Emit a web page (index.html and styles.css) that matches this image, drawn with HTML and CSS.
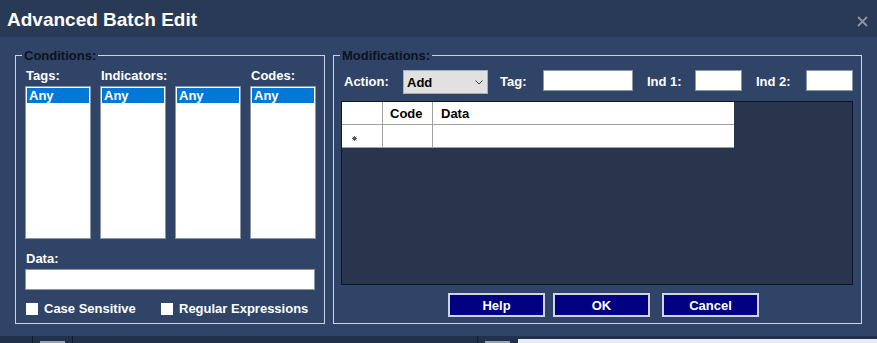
FILE: index.html
```html
<!DOCTYPE html>
<html lang="en">
<head>
    <meta charset="UTF-8">
    <title>Advanced Batch Edit</title>
    <link rel="stylesheet" href="styles.css">
</head>
<body>

    <div class="titlebar">
        <span class="title">Advanced Batch Edit</span>
        <svg class="close" width="11" height="11" viewBox="0 0 11 11">
            <path d="M1 1 L10 10 M10 1 L1 10" stroke="#8b94a5" stroke-width="1.8" fill="none"/>
        </svg>
    </div>

    <div class="main">
        <fieldset class="group conditions">
            <legend>Conditions:</legend>
            <div class="lists">
                <label class="lbl">Tags:</label>
                <label class="lbl span2">Indicators:</label>
                <label class="lbl">Codes:</label>
                <div class="listbox"><div class="item sel">Any</div></div>
                <div class="listbox"><div class="item sel">Any</div></div>
                <div class="listbox"><div class="item sel">Any</div></div>
                <div class="listbox"><div class="item sel">Any</div></div>
            </div>
            <label class="lbl data-lbl">Data:</label>
            <input type="text" class="textbox data-input">
            <div class="checks">
                <label class="check first"><input type="checkbox">Case Sensitive</label>
                <label class="check"><input type="checkbox">Regular Expressions</label>
            </div>
        </fieldset>

        <fieldset class="group mods">
            <legend>Modifications:</legend>
            <div class="action-row">
                <label class="lbl act-lbl">Action:</label>
                <div class="combo">
                    <span>Add</span>
                    <svg width="8" height="5" viewBox="0 0 8 5">
                        <path d="M0.5 0.5 L4 4 L7.5 0.5" stroke="#3c3c3c" stroke-width="1" fill="none"/>
                    </svg>
                </div>
                <label class="lbl tag-lbl">Tag:</label>
                <input type="text" class="textbox tag-input">
                <label class="lbl ind1-lbl">Ind 1:</label>
                <input type="text" class="textbox ind-input">
                <label class="lbl ind2-lbl">Ind 2:</label>
                <input type="text" class="textbox ind-input">
            </div>

            <div class="dgv">
                <table>
                    <tr class="head">
                        <td class="rowhead"></td>
                        <td class="code">Code</td>
                        <td>Data</td>
                    </tr>
                    <tr>
                        <td class="rowhead">
                            <svg width="5" height="5" viewBox="0 0 5 5">
                                <path d="M2.5 0 V5 M0 2.5 H5 M0.7 0.7 L4.3 4.3 M4.3 0.7 L0.7 4.3" stroke="#555" stroke-width="1" fill="none"/>
                            </svg>
                        </td>
                        <td class="code"></td>
                        <td></td>
                    </tr>
                </table>
            </div>

            <div class="buttons">
                <button class="btn">Help</button>
                <button class="btn ok">OK</button>
                <button class="btn cancel">Cancel</button>
            </div>
        </fieldset>
    </div>

    <div class="strip">
        <span class="sline first-line"></span>
        <span class="sbox"></span>
        <span class="sline second-line"></span>
        <span class="sline third-line"></span>
        <span class="sbox"></span>
        <span class="swhite"></span>
    </div>

</body>
</html>
```

FILE: styles.css
```css
body {
    margin: 0;
    width: 877px;
    height: 343px;
    overflow: hidden;
    background: #2f4466;
    font-family: "Liberation Sans", Arial, sans-serif;
    font-size: 13px;
    font-weight: bold;
    color: #fff;
}
.titlebar {
    display: flex;
    justify-content: space-between;
    align-items: flex-start;
    height: 37px;
    background: #293a56;
}
.title {
    font-size: 19px;
    line-height: 34px;
    padding: 3px 0 0 7px;
}
.close {
    margin: 16px 9px 0 0;
}
.main {
    display: flex;
    align-items: flex-start;
    gap: 8px;
    padding: 11px 15px 12px;
}
.group {
    margin: 0;
    height: 276px;
    min-width: 0;
    box-sizing: border-box;
    border: 1px solid #c9d3e3;
}
.group legend {
    padding: 0 2px;
    color: #0c1322;
    font-size: 13px;
    line-height: 15px;
}
.conditions {
    width: 310px;
    padding: 5px 9px 6px 9px;
}
.conditions legend {
    margin-left: -3px;
}
.mods {
    width: 529px;
    padding: 7px 8px 5px 7px;
}
.mods legend {
    margin-left: -1px;
}
.lbl {
    display: block;
    line-height: 15px;
    padding-left: 1px;
}
.lists {
    display: grid;
    grid-template-columns: repeat(4, 66px);
    column-gap: 9px;
    row-gap: 3px;
}
.span2 {
    grid-column: span 2;
}
.listbox {
    height: 153px;
    box-sizing: border-box;
    background: #fff;
    border: 1px solid #8e96a4;
    padding: 1px;
}
.item {
    line-height: 15px;
    padding-left: 2px;
}
.sel {
    background: #0078d7;
    color: #fff;
}
.textbox {
    display: block;
    box-sizing: border-box;
    height: 21px;
    margin: 0;
    background: #fff;
    border: 1px solid #8e96a4;
    padding: 0;
}
.data-lbl {
    margin-top: 12px;
    margin-bottom: 3px;
}
.data-input {
    width: 290px;
}
.checks {
    display: flex;
    margin-top: 11px;
    padding-left: 1px;
    line-height: 15px;
}
.check {
    display: flex;
    align-items: center;
    gap: 6px;
}
.check.first {
    width: 135px;
}
.check input {
    appearance: none;
    width: 12px;
    height: 12px;
    margin: 0;
    background: #fff;
    border: none;
}
.action-row {
    display: flex;
    align-items: flex-start;
    height: 24px;
    margin-bottom: 7px;
}
.action-row .lbl {
    line-height: 24px;
    padding-left: 0;
}
.act-lbl {
    margin-left: 3px;
    width: 59px;
}
.combo {
    display: flex;
    align-items: center;
    justify-content: space-between;
    box-sizing: border-box;
    width: 85px;
    height: 24px;
    padding: 0 4px 0 3px;
    background: #e1e1e1;
    border: 1px solid #adadad;
    color: #000;
}
.tag-lbl {
    margin-left: 12px;
    width: 43px;
}
.tag-input {
    width: 90px;
}
.ind1-lbl {
    margin-left: 14px;
    width: 48px;
}
.ind2-lbl {
    margin-left: 14px;
    width: 50px;
}
.ind-input {
    width: 47px;
}
.dgv {
    height: 184px;
    box-sizing: border-box;
    background: #28354d;
    border: 1px solid #0e1626;
}
table {
    border-collapse: collapse;
    table-layout: fixed;
    width: 392px;
    background: #fff;
    color: #000;
}
td {
    height: 22px;
    padding: 0 0 0 7px;
    border-right: 1px solid #a0a0a0;
    border-bottom: 1px solid #a0a0a0;
}
td:last-child {
    border-right: none;
    padding-left: 8px;
}
.rowhead {
    width: 33px;
    padding-left: 10px;
    padding-right: 0;
    width: 30px;
}
.code {
    width: 42px;
}
.buttons {
    display: flex;
    margin-top: 8px;
    padding-left: 107px;
}
.btn {
    width: 97px;
    height: 24px;
    margin: 0;
    padding: 0;
    background: #000080;
    border: 2px solid #d0d4dc;
    color: #fff;
    font-family: "Liberation Sans", Arial, sans-serif;
    font-size: 13px;
    font-weight: bold;
}
.ok {
    margin-left: 8px;
}
.cancel {
    margin-left: 12px;
}
.strip {
    display: flex;
    align-items: flex-start;
    height: 7px;
    background: #22314b;
}
.sline {
    width: 1px;
    height: 7px;
    background: #111a2a;
}
.first-line {
    margin-left: 32px;
}
.sbox {
    width: 25px;
    height: 2px;
    margin: 5px 0 0 7px;
    background: #9aa3b0;
}
.second-line {
    margin-left: 7px;
}
.third-line {
    margin-left: 404px;
}
.swhite {
    flex: 1;
    height: 4px;
    margin: 3px 0 0 8px;
    background: #e8ecf2;
}
```
